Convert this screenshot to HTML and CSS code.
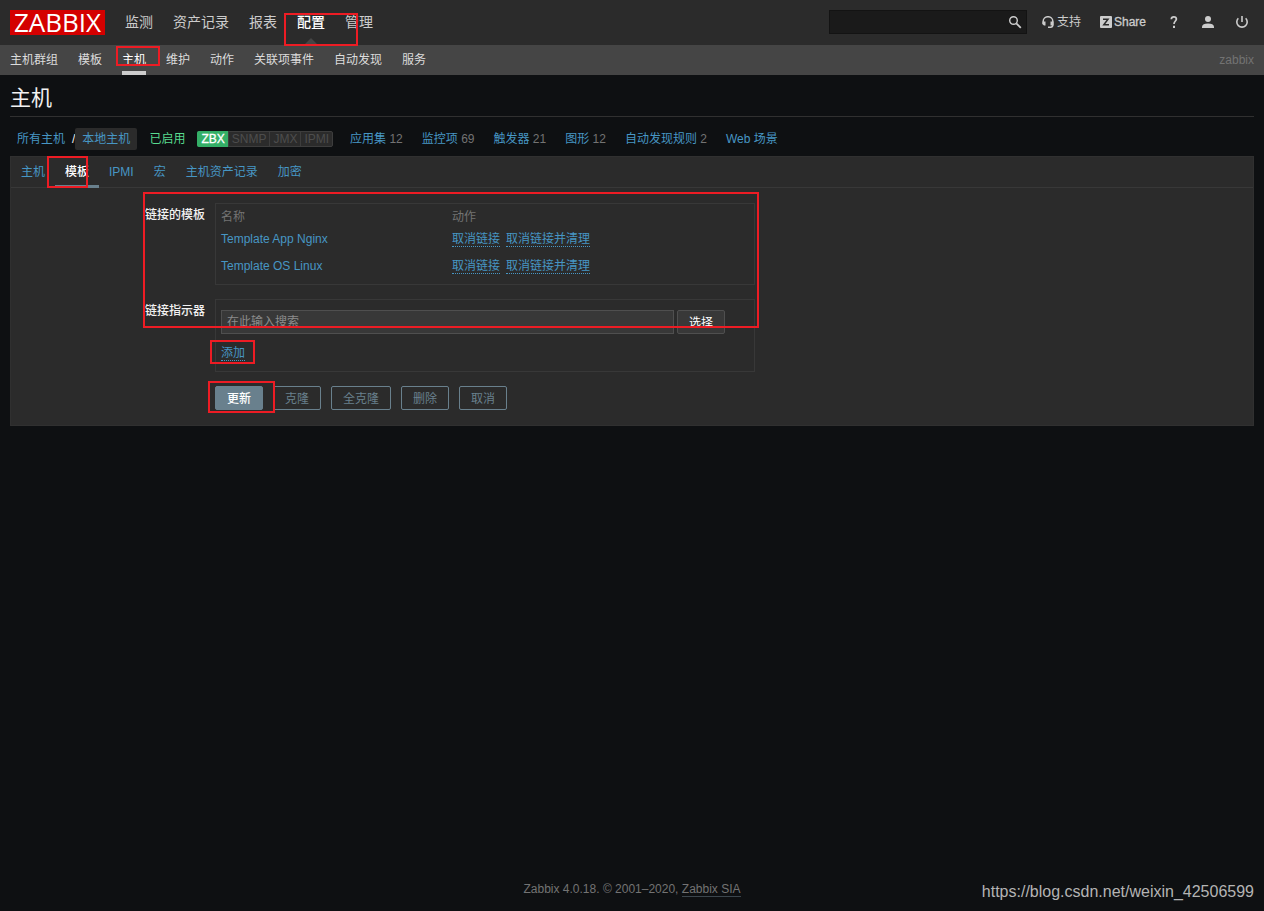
FILE: index.html
```
<!DOCTYPE html>
<html lang="zh-CN">
<head>
<meta charset="utf-8">
<meta name="viewport" content="width=device-width, initial-scale=1">
<title>Zabbix: 主机</title>
<link rel="stylesheet" href="styles.css">
</head>
<body>
<header>
  <div class="top-nav">
    <a class="logo" href="#">ZABBIX</a>
    <nav class="main-menu">
      <a href="#">监测</a>
      <a href="#">资产记录</a>
      <a href="#">报表</a>
      <a class="selected" href="#">配置</a>
      <a href="#">管理</a>
    </nav>
    <form class="search">
      <input type="text" aria-label="搜索">
      <button type="button" aria-label="搜索">
        <svg width="14" height="14" viewBox="0 0 14 14" fill="none" stroke="#ccc"><circle cx="5.5" cy="5.500" r="3.800" stroke-width="1.400"/><path d="M8.300 8.300l4.500 4.500" stroke-width="1.800"/></svg>
      </button>
    </form>
    <a class="support" href="#"><svg width="12" height="12" viewBox="0 0 12 12"><path d="M1.200 8V5.200a4.800 4.500 0 0 1 9.600 0V9q0 2.200-2.300 2.200H6" fill="none" stroke="#ccc" stroke-width="1.500"/><path d="M.5 5.500h3v4H2L.5 8.300zM8.500 5.500h3v4h-3z" fill="#ccc"/></svg>支持</a>
    <a class="share" href="#"><svg width="12" height="12" viewBox="0 0 12 12"><rect width="12" height="12" rx="1" fill="#ccc"/><path d="M3 3.200h5L3.800 8.800H9" fill="none" stroke="#2b2b2b" stroke-width="1.500"/></svg>Share</a>
    <a class="icon-link help" href="#" aria-label="帮助"><svg width="12" height="14" viewBox="0 0 12 14"><path d="M3.300 4.200Q3.300 1.800 5.800 1.800t2.600 2.300c0 1.800-2.400 2.100-2.400 4.900" fill="none" stroke="#ccc" stroke-width="1.700"/><path d="M5 10.800h2v2.200H5z" fill="#ccc"/></svg></a>
    <a class="icon-link" href="#" aria-label="用户"><svg width="12" height="12" viewBox="0 0 12 12" fill="#ccc"><circle cx="6" cy="3" r="3"/><path d="M0 12v-1.500Q.5 7.500 6 7.500t6 3V12z"/></svg></a>
    <a class="icon-link" href="#" aria-label="退出"><svg width="14" height="14" viewBox="0 0 14 14" fill="none" stroke="#ccc" stroke-width="1.600"><path d="M3.300 3.300a5.200 5.200 0 1 0 7.400 0M7 1v6"/></svg></a>
  </div>
  <div class="sub-nav">
    <nav>
      <a href="#">主机群组</a>
      <a href="#">模板</a>
      <a class="selected" href="#">主机</a>
      <a href="#">维护</a>
      <a href="#">动作</a>
      <a href="#">关联项事件</a>
      <a href="#">自动发现</a>
      <a href="#">服务</a>
    </nav>
    <span class="server-name">zabbix</span>
  </div>
</header>

<main>
  <h1>主机</h1>
  <div class="object-bar">
    <a href="#">所有主机</a>
    <span class="slash">/</span>
    <a class="current" href="#">本地主机</a>
    <span class="enabled">已启用</span>
    <span class="status"><span class="on">ZBX</span><span>SNMP</span><span>JMX</span><span>IPMI</span></span>
    <ul class="counts">
      <li><a href="#">应用集</a> 12</li>
      <li><a href="#">监控项</a> 69</li>
      <li><a href="#">触发器</a> 21</li>
      <li><a href="#">图形</a> 12</li>
      <li><a href="#">自动发现规则</a> 2</li>
      <li><a href="#">Web 场景</a></li>
    </ul>
  </div>

  <section class="panel">
    <nav class="tabs">
      <a href="#">主机</a>
      <a class="selected" href="#">模板</a>
      <a href="#">IPMI</a>
      <a href="#">宏</a>
      <a href="#">主机资产记录</a>
      <a href="#">加密</a>
    </nav>
    <form class="form">
      <span class="label">链接的模板</span>
      <div class="box">
        <table>
          <thead><tr><th>名称</th><th>动作</th></tr></thead>
          <tbody>
            <tr><td><a href="#">Template App Nginx</a></td><td><button type="button" class="link">取消链接</button><button type="button" class="link">取消链接并清理</button></td></tr>
            <tr><td><a href="#">Template OS Linux</a></td><td><button type="button" class="link">取消链接</button><button type="button" class="link">取消链接并清理</button></td></tr>
          </tbody>
        </table>
      </div>
      <label class="label" for="templates">链接指示器</label>
      <div class="box add-box">
        <div class="picker">
          <input id="templates" type="text" placeholder="在此输入搜索">
          <button type="button" class="select">选择</button>
        </div>
        <button type="button" class="link">添加</button>
      </div>
      <div class="actions">
        <button type="button" class="primary">更新</button>
        <button type="button">克隆</button>
        <button type="button">全克隆</button>
        <button type="button">删除</button>
        <button type="button">取消</button>
      </div>
    </form>
  </section>
</main>

<footer>
  <span>Zabbix 4.0.18. © 2001–2020, <a href="#">Zabbix SIA</a></span>
</footer>
<div class="watermark">https://blog.csdn.net/weixin_42506599</div>

<div class="mark mark-menu"></div>
<div class="mark mark-submenu"></div>
<div class="mark mark-tab"></div>
<div class="mark mark-form"></div>
<div class="mark mark-add"></div>
<div class="mark mark-update"></div>
</body>
</html>
```
FILE: styles.css
```
* { box-sizing: border-box; }

body {
  position: relative;
  display: flex;
  flex-direction: column;
  min-height: 100vh;
  margin: 0;
  background: #0e1012;
  color: #f2f2f2;
  font: 12px/16px "Liberation Sans", "Noto Sans CJK SC", sans-serif;
}

a { color: #4796c4; text-decoration: none; }
button, input { font: inherit; }
svg { display: block; flex: none; }

/* header */
.top-nav {
  display: flex;
  align-items: center;
  height: 45px;
  padding: 0 15px 1px 10px;
  background: #2b2b2b;
}
.logo {
  width: 95px;
  height: 25px;
  background: #d40000;
  color: #fff;
  font: 26px/25px "Open Sans", sans-serif;
  text-align: center;
}
.main-menu {
  display: flex;
  gap: 20px;
  margin: 0 auto 0 20px;
  font-size: 14px;
  line-height: 45px;
}
.main-menu a, .support, .share { color: #ccc; }
.main-menu .selected {
  position: relative;
  color: #fff;
  font-weight: 500;
}
.main-menu .selected::after {
  content: "";
  position: absolute;
  left: 7px;
  bottom: 0;
  border: 7px solid transparent;
  border-top: 0;
  border-bottom-color: #454545;
}
.search {
  display: flex;
  width: 198px;
  height: 24px;
  margin-right: 15px;
  border: 1px solid #131313;
  background: #1a1a1a;
}
.search input {
  flex: 1;
  min-width: 0;
  border: 0;
  background: transparent;
  color: #f2f2f2;
}
.search button {
  padding: 0 4px 0 0;
  border: 0;
  background: transparent;
}
.support, .share { display: flex; align-items: center; }
.support { gap: 3px; margin-right: 19px; }
.share { gap: 2px; margin-right: 22px; -webkit-text-stroke: 0.3px #ccc; }
.icon-link + .icon-link { margin-left: 21px; }
.help + .icon-link { margin-left: 22px; }

.sub-nav {
  display: flex;
  justify-content: space-between;
  height: 30px;
  padding: 0 10px;
  background: #454545;
  line-height: 30px;
}
.sub-nav nav { display: flex; gap: 20px; }
.sub-nav a { color: #dcdcdc; }
.sub-nav .selected {
  border-bottom: 4px solid #ccc;
  color: #fff;
}
.server-name { color: #737373; }

/* page */
main { padding: 0 10px; }
h1 {
  margin: 0;
  border-bottom: 1px solid #303030;
  font-size: 21px;
  font-weight: 400;
  line-height: 24px;
  padding: 11px 0 6px;
}
.object-bar {
  display: flex;
  align-items: center;
  height: 22px;
  margin: 11px 0 6px;
  padding-left: 7px;
}
.slash { margin-left: 7px; }
.current {
  padding: 3px 7px;
  border-radius: 2px;
  background: #2b2b2b;
}
.enabled { margin: 0 12px; color: #59db8f; }
.status {
  display: flex;
  border: 1px solid #3d3d3d;
  border-radius: 2px;
  background: #2b2b2b;
  color: #4d4d4d;
  line-height: 14px;
}
.status span { padding: 0 3px; }
.status span + span { border-left: 1px solid #3d3d3d; }
.status .on {
  margin: -1px 0 -1px -1px;
  padding: 1px 3px 1px 4px;
  border-radius: 2px 0 0 2px;
  background: #34af67;
  color: #fff;
  -webkit-text-stroke: 0.3px #fff;
}
.counts {
  display: flex;
  gap: 19px;
  margin: 0 0 0 17px;
  padding: 0;
  color: #737373;
  list-style: none;
}

.panel {
  border: 1px solid #303030;
  background: #2b2b2b;
}
.tabs {
  display: flex;
  height: 31px;
  border-bottom: 1px solid #383838;
  line-height: 30px;
}
.tabs a { height: 31px; padding: 0 10px; }
.tabs .selected {
  border-bottom: 3px solid #69808d;
  color: #fff;
  font-weight: 500;
}
.form {
  display: grid;
  grid-template-columns: 194px minmax(0, 540px);
  gap: 14px 10px;
  padding: 15px 0;
}
.label { padding-top: 4px; text-align: right; font-weight: 500; }
.box {
  padding: 4px 5px;
  border: 1px solid #383838;
}
table { width: 100%; border-collapse: collapse; margin-bottom: 1px; }
th, td { padding: 0; text-align: left; }
th { width: 231px; height: 17px; color: #737373; font-weight: 400; }
th + th { width: auto; }
td { height: 27px; }
.link {
  padding: 2px 0 0;
  border: 0;
  border-bottom: 1px dotted #4796c4;
  background: transparent;
  color: #4796c4;
  line-height: 13px;
}
.link + .link { margin-left: 6px; }
.add-box { padding: 10px 5px; }
.picker {
  display: flex;
  gap: 3px;
  margin-bottom: 11px;
}
.picker input {
  width: 453px;
  height: 24px;
  min-width: 0;
  padding: 0 5px;
  border: 1px solid #4f4f4f;
  background: #383838;
  color: #f2f2f2;
}
.picker input::placeholder { color: #8c8c8c; }
.actions { grid-column: 2; display: flex; gap: 10px; }
.actions button, .select {
  height: 24px;
  padding: 2px 11px 0;
  border: 1px solid #69808d;
  border-radius: 2px;
  background: transparent;
  color: #69808d;
}
.actions .primary { background: #69808d; color: #fff; font-weight: 500; }
.select { border-color: #4f4f4f; background: #383838; color: #fff; }

footer {
  margin-top: auto;
  padding-bottom: 14px;
  color: #737373;
  text-align: center;
}
footer a { border-bottom: 1px solid #3c464d; color: #737373; }
.watermark {
  position: absolute;
  right: 10px;
  bottom: 10px;
  color: #b4b4b4;
  font-size: 16px;
  line-height: 18px;
}

/* red annotation frames laid over the page */
.mark { position: absolute; border: 2px solid #ed1c24; pointer-events: none; }
.mark-menu { left: 284px; top: 13px; width: 74px; height: 33px; }
.mark-submenu { left: 116px; top: 46px; width: 44px; height: 20px; }
.mark-tab { left: 47px; top: 156px; width: 41px; height: 32px; }
.mark-form { left: 143px; top: 192px; width: 616px; height: 136px; }
.mark-add { left: 210px; top: 340px; width: 45px; height: 24px; }
.mark-update { left: 208px; top: 381px; width: 67px; height: 32px; }
```
